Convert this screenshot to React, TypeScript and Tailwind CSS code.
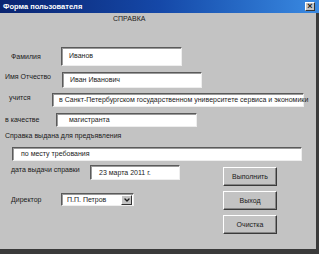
import { ChevronDown } from 'lucide-react'

const sunken =
  'bg-white border border-t-[#5a5a5a] border-l-[#5a5a5a] border-r-[#eeeeee] border-b-[#eeeeee] shadow-[inset_1px_1px_0_#9a9a9a] flex items-center'
const raised =
  'bg-[#c3c3c3] border border-t-white border-l-white border-r-[#3a3a3a] border-b-[#3a3a3a] shadow-[inset_-1px_-1px_0_#858585] flex items-center justify-center'

function Field({ className, text, pad }: { className: string; text: string; pad: string }) {
  return (
    <div className={`${sunken} ${className}`}>
      <span className={`${pad} whitespace-nowrap`}>{text}</span>
    </div>
  )
}

export default function App() {
  return (
    <div
      className="w-[319px] h-[254px] flex flex-col bg-[#c3c3c3] text-[7px] text-[#1a1a1a] leading-[10px]"
      style={{ fontFamily: '"Liberation Sans", Arial, sans-serif' }}
    >
      <div className="h-[13px] flex items-center justify-between bg-gradient-to-r from-[#0a2470] via-[#1548a8] to-[#3a8ae2] pl-[3px] pr-[4px]">
        <span className="text-white font-bold text-[7.5px]">Форма пользователя</span>
        <div className="w-[10px] h-[9px] bg-[#c3c3c3] border border-t-white border-l-white border-r-[#333] border-b-[#333] flex items-center justify-center text-[9px] leading-none font-bold">
          ×
        </div>
      </div>

      <div className="flex-1 flex flex-col border-r-[3px] border-b-[5px] border-[#3a3a3a]">
        <div className="pl-[113px] h-[10px] mt-[1px]">СПРАВКА</div>

        <div className="mt-[23px] flex items-center h-[19px]">
          <span className="w-[61px] pl-[11px]">Фамилия</span>
          <Field className="w-[121px] h-[19px] self-stretch items-start pt-[3px]" pad="pl-[7px]" text="Иванов" />
        </div>

        <div className="mt-[6px] flex items-start h-[16px]">
          <span className="w-[62px] pl-[5px]">Имя Отчество</span>
          <Field className="w-[140px] h-[16px]" pad="pl-[7px]" text="Иван Иванович" />
        </div>

        <div className="mt-[5px] flex items-center h-[14px]">
          <span className="w-[52px] pl-[9px] self-start">учится</span>
          <Field
            className="w-[252px] h-[14px]"
            pad="pl-[6px]"
            text="в Санкт-Петербургском государственном университете сервиса и экономики"
          />
        </div>

        <div className="mt-[6px] flex items-center h-[14px]">
          <span className="w-[56px] pl-[5px]">в качестве</span>
          <Field className="w-[141px] h-[14px]" pad="pl-[12px]" text="магистранта" />
        </div>

        <div className="mt-[4px] pl-[5px] h-[10px]">Справка выдана для предъявления</div>

        <div className="mt-[6px] pl-[12px]">
          <Field className="w-[290px] h-[14px]" pad="pl-[8px]" text="по месту требования" />
        </div>

        <div className="mt-[4px] flex">
          <div className="flex flex-col">
            <div className="flex items-center h-[15px]">
              <span className="w-[90px] pl-[11px] self-start">дата выдачи справки</span>
              <Field className="w-[90px] h-[15px]" pad="pl-[8px]" text="23 марта 2011 г." />
            </div>
            <div className="mt-[13px] flex items-center h-[13px]">
              <span className="w-[61px] pl-[11px]">Директор</span>
              <div className={`${sunken} w-[73px] h-[13px] justify-between`}>
                <span className="pl-[5px]">П.П. Петров</span>
                <div className="w-[11px] h-[10px] mr-[1px] bg-[#c3c3c3] border border-t-white border-l-white border-r-[#333] border-b-[#333] flex items-center justify-center">
                  <ChevronDown className="w-[8px] h-[8px]" strokeWidth={4} />
                </div>
              </div>
            </div>
          </div>
          <div className="ml-[43px] mt-[2px] flex flex-col gap-[5px]">
            <div className={`${raised} w-[54px] h-[19px]`}>Выполнить</div>
            <div className={`${raised} w-[54px] h-[19px]`}>Выход</div>
            <div className={`${raised} w-[54px] h-[19px]`}>Очистка</div>
          </div>
        </div>
      </div>
    </div>
  )
}
